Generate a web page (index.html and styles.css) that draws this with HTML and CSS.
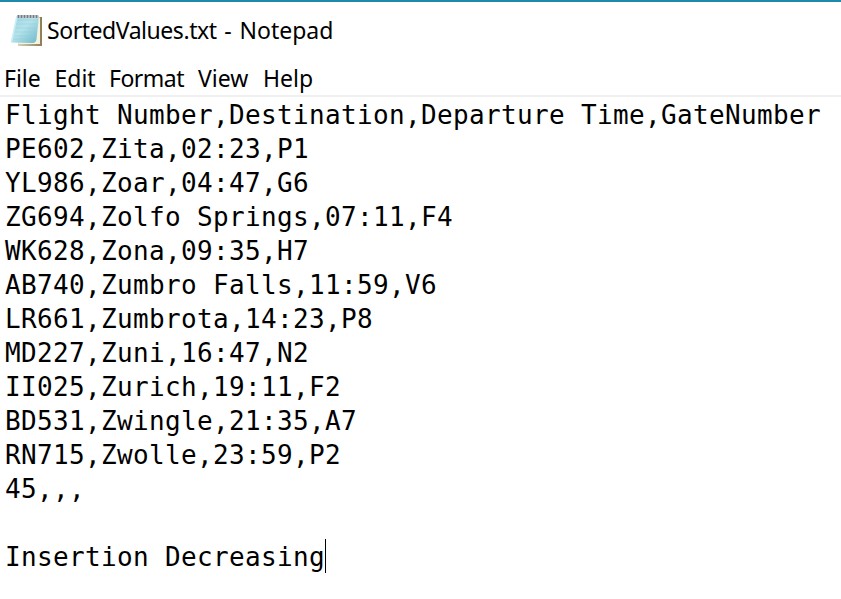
FILE: index.html
```html
<!DOCTYPE html>
<html lang="en">
<head>
<meta charset="utf-8">
<title>SortedValues.txt - Notepad</title>
<link rel="stylesheet" href="styles.css">
</head>
<body>
<div class="window">
<header class="titlebar">
<svg class="app-icon" width="34" height="34" viewBox="0 0 34 34" aria-hidden="true">
<defs>
<linearGradient id="sheet" x1="0" y1="0" x2="1" y2="1"><stop offset="0" stop-color="#9ed5e1"/><stop offset=".45" stop-color="#b5e3ec"/><stop offset="1" stop-color="#6bb6c8"/></linearGradient>
<linearGradient id="back" x1="0" y1="0" x2="1" y2="0"><stop offset="0" stop-color="#d8d2b8"/><stop offset="1" stop-color="#8e7d53"/></linearGradient>
</defs>
<path d="M28 5h4v29H8v-3h18z" fill="url(#back)"/>
<path d="M28 4l2 2v26H9l-2-2z" fill="#f5f2df"/>
<path d="M7 4h22l-2.500 23q-.5 4-4 4L1 30.500z" fill="url(#sheet)"/>
<path d="M7 8h21M6 12h21M5.500 16h21M4.500 20h21M4 24h21M3 27h21" stroke="#8cc9d7" stroke-width="1" opacity=".4"/>
<path d="M7 4L1.500 30" stroke="#c9edf2" stroke-width="1.500"/>
<path d="M7 4.500h21.500" stroke="#c3cbd0" stroke-width="3"/>
<path d="M8.500 3v3m3-3v3m3-3v3m3-3v3m3-3v3m3-3v3m3-3v3" stroke="#747b82" stroke-width="1.500"/>
</svg>
<h1 class="title"><span class="filename">SortedValues.txt</span> - Notepad</h1>
</header>
<nav class="menubar">
<span class="file">File</span><span class="edit">Edit</span><span class="format">Format</span><span class="view">View</span><span class="help">Help</span>
</nav>
<main class="document"><pre>Flight Number,Destination,Departure Time,GateNumber
PE602,Zita,02:23,P1
YL986,Zoar,04:47,G6
ZG694,Zolfo Springs,07:11,F4
WK628,Zona,09:35,H7
AB740,Zumbro Falls,11:59,V6
LR661,Zumbrota,14:23,P8
MD227,Zuni,16:47,N2
II025,Zurich,19:11,F2
BD531,Zwingle,21:35,A7
RN715,Zwolle,23:59,P2
45,,,

Insertion Decreasing<span class="caret"></span></pre></main>
</div>
</body>
</html>
```
FILE: styles.css
```css
* { box-sizing: border-box; }
body { margin: 0; background: #fff; color: #000; overflow: hidden; }
.window { height: 599px; border-top: 2px solid #1e8aab; }
.titlebar { height: 58px; display: flex; align-items: flex-start; padding: 10px 0 0 10px; font-family: "Noto Sans", sans-serif; }
.app-icon { flex: none; }
.title { margin: 1px 0 0 3px; font-size: 23px; line-height: 34px; font-weight: 400; word-spacing: 1.8px; white-space: nowrap; }
.filename { letter-spacing: -.45px; }
.menubar { height: 37px; display: grid; grid-template-columns: 50.500px 54.500px 89px 65px 60px; padding-left: 4px; border-bottom: 2px solid #f0f0f0; font: 23px/37px "Noto Sans", sans-serif; white-space: nowrap; }
.format { letter-spacing: -.5px; }
.document { padding: 1px 0 0 5px; }
pre { margin: 0; font: 26px/34px "DejaVu Sans Mono", monospace; letter-spacing: .347px; }
.caret { display: inline-block; width: 1px; height: 34px; margin-top: -1px; background: #000; vertical-align: top; }
```
